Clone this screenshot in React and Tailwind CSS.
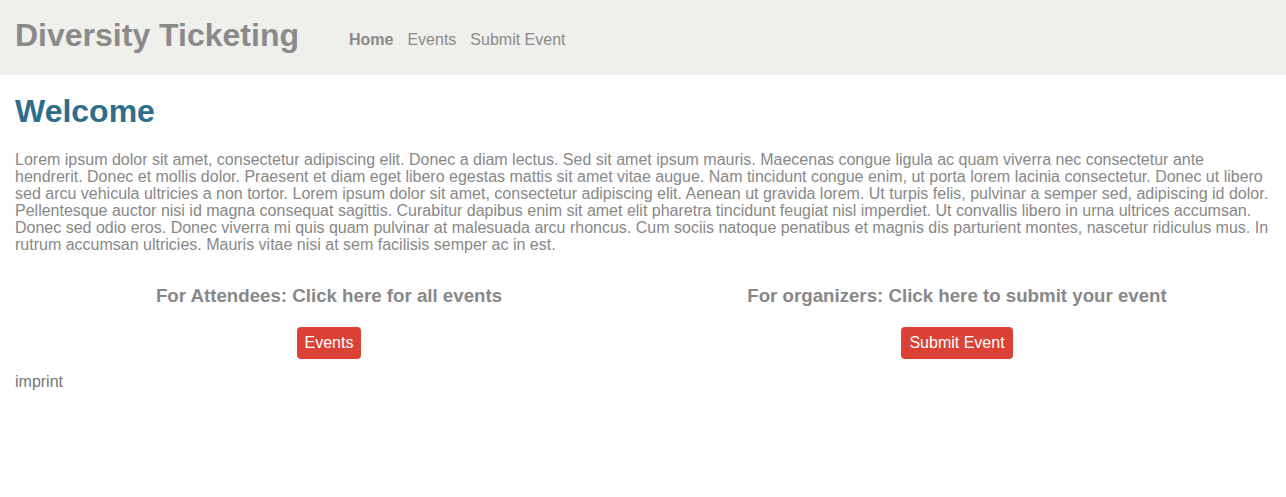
export default function App() {
  return (
    <div className="min-h-[497px] bg-white font-['Liberation_Sans',Arial,sans-serif] text-[#888888]">
      <header className="h-[75px] bg-[#efefeb] px-[15px] flex items-center">
        <a href="#" className="text-[32px] font-bold text-[#8a8a8a] leading-none mr-[50px] -mt-[6px]">
          Diversity Ticketing
        </a>
        <nav className="flex items-center gap-[14px] text-[16px] text-[#8a8a8a] mt-[4px]">
          <a href="#" className="font-bold">Home</a>
          <a href="#">Events</a>
          <a href="#">Submit Event</a>
        </nav>
      </header>

      <main className="px-[15px]">
        <h1 className="text-[32px] font-bold text-[#2f6e88] leading-none pt-[20px] mb-[24px]">Welcome</h1>
        <p className="text-[16px] leading-[17px] text-[#888888]">
          Lorem ipsum dolor sit amet, consectetur adipiscing elit. Donec a diam lectus. Sed sit amet ipsum mauris. Maecenas congue ligula ac quam viverra nec consectetur ante hendrerit. Donec et mollis dolor. Praesent et diam eget libero egestas mattis sit amet vitae augue. Nam tincidunt congue enim, ut porta lorem lacinia consectetur. Donec ut libero sed arcu vehicula ultricies a non tortor. Lorem ipsum dolor sit amet, consectetur adipiscing elit. Aenean ut gravida lorem. Ut turpis felis, pulvinar a semper sed, adipiscing id dolor. Pellentesque auctor nisi id magna consequat sagittis. Curabitur dapibus enim sit amet elit pharetra tincidunt feugiat nisl imperdiet. Ut convallis libero in urna ultrices accumsan. Donec sed odio eros. Donec viverra mi quis quam pulvinar at malesuada arcu rhoncus. Cum sociis natoque penatibus et magnis dis parturient montes, nascetur ridiculus mus. In rutrum accumsan ultricies. Mauris vitae nisi at sem facilisis semper ac in est.
        </p>

        <div className="grid grid-cols-2 mt-[33px]">
          <div className="flex flex-col items-center">
            <h3 className="text-[18.7px] font-bold text-[#888888] leading-[20px]">For Attendees: Click here for all events</h3>
            <a href="#" className="mt-[21px] h-[32px] px-[8px] flex items-center rounded-[4px] bg-[#dc4136] text-white text-[16px]">
              Events
            </a>
          </div>
          <div className="flex flex-col items-center">
            <h3 className="text-[18.7px] font-bold text-[#888888] leading-[20px]">For organizers: Click here to submit your event</h3>
            <a href="#" className="mt-[21px] h-[32px] px-[8px] flex items-center rounded-[4px] bg-[#dc4136] text-white text-[16px]">
              Submit Event
            </a>
          </div>
        </div>

        <footer className="mt-[13px] text-[16px] leading-[20px] text-[#777777]">
          <a href="#">imprint</a>
        </footer>
      </main>
    </div>
  )
}
